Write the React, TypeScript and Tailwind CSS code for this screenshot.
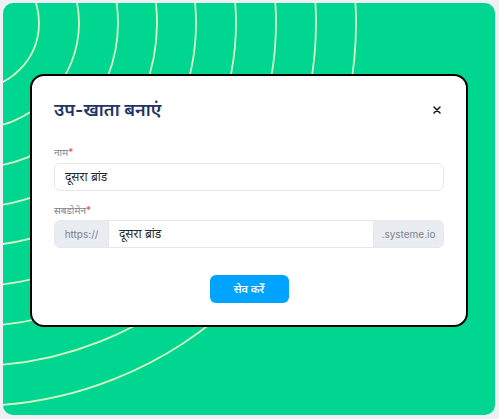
import React from "react";

const radii = [66, 106, 145, 184, 223, 263, 303, 343, 383];

function Arcs() {
  return (
    <svg
      className="pointer-events-none absolute inset-0 h-full w-full"
      viewBox="0 0 492 412"
      fill="none"
    >
      {radii.map((r) => (
        <circle
          key={r}
          cx={-30}
          cy={20}
          r={r}
          stroke="#d6f6c6"
          strokeWidth={1.8}
        />
      ))}
    </svg>
  );
}

function CloseIcon() {
  return (
    <svg width="8" height="8" viewBox="0 0 8 8" fill="none">
      <path d="M1 1L7 7M7 1L1 7" stroke="#111827" strokeWidth="1.5" strokeLinecap="round" />
    </svg>
  );
}

export default function App() {
  return (
    <div className="h-[419px] w-[499px] bg-[#eef0f4] pb-[4px] pl-[3px] pr-[4px] pt-[3px] font-['Inter','Noto_Sans',sans-serif]">
      <div className="relative flex h-full w-full justify-center overflow-hidden rounded-[10px] bg-[#00d68f] pt-[71px]">
        <Arcs />
        <div className="relative h-[253px] w-[438px] rounded-[14px] border-2 border-black bg-white px-[22px] pt-[20px]">
          <div className="flex h-[28px] items-center justify-between">
            <h2 className="text-[18px] font-semibold leading-[28px] text-[#1f3366]">
              उप-खाता बनाएं
            </h2>
            <button className="mr-[3px] flex h-[16px] w-[8px] items-center justify-center">
              <CloseIcon />
            </button>
          </div>

          <div className="mt-[21px]">
            <label className="block text-[10px] leading-[14px] text-[#7b8191]">
              नाम<span className="text-[#f04444]">*</span>
            </label>
            <div className="mt-[4px] flex h-[28px] items-center rounded-[6px] border border-[#e5e7eb] px-[10px] text-[12px] text-[#1f2937]">
              दूसरा ब्रांड
            </div>
          </div>

          <div className="mt-[12px]">
            <label className="block text-[10px] leading-[14px] text-[#7b8191]">
              सबडोमेन<span className="text-[#f04444]">*</span>
            </label>
            <div className="mt-[3px] flex h-[28px] overflow-hidden rounded-[6px] border border-[#e5e7eb] text-[12px]">
              <div className="flex w-[54px] items-center justify-center border-r border-[#e5e7eb] bg-[#e9ecf0] text-[10px] text-[#7b8191]">
                https://
              </div>
              <div className="flex flex-1 items-center px-[10px] text-[#1f2937]">
                दूसरा ब्रांड
              </div>
              <div className="flex w-[70px] items-center justify-center border-l border-[#e5e7eb] bg-[#e9ecf0] text-[10px] text-[#7b8191]">
                .systeme.io
              </div>
            </div>
          </div>

          <div className="mt-[27px] flex justify-center">
            <button className="h-[28px] w-[79px] rounded-[6px] bg-[#00a3ff] text-[11px] font-semibold text-white">
              सेव करें
            </button>
          </div>
        </div>
      </div>
    </div>
  );
}
